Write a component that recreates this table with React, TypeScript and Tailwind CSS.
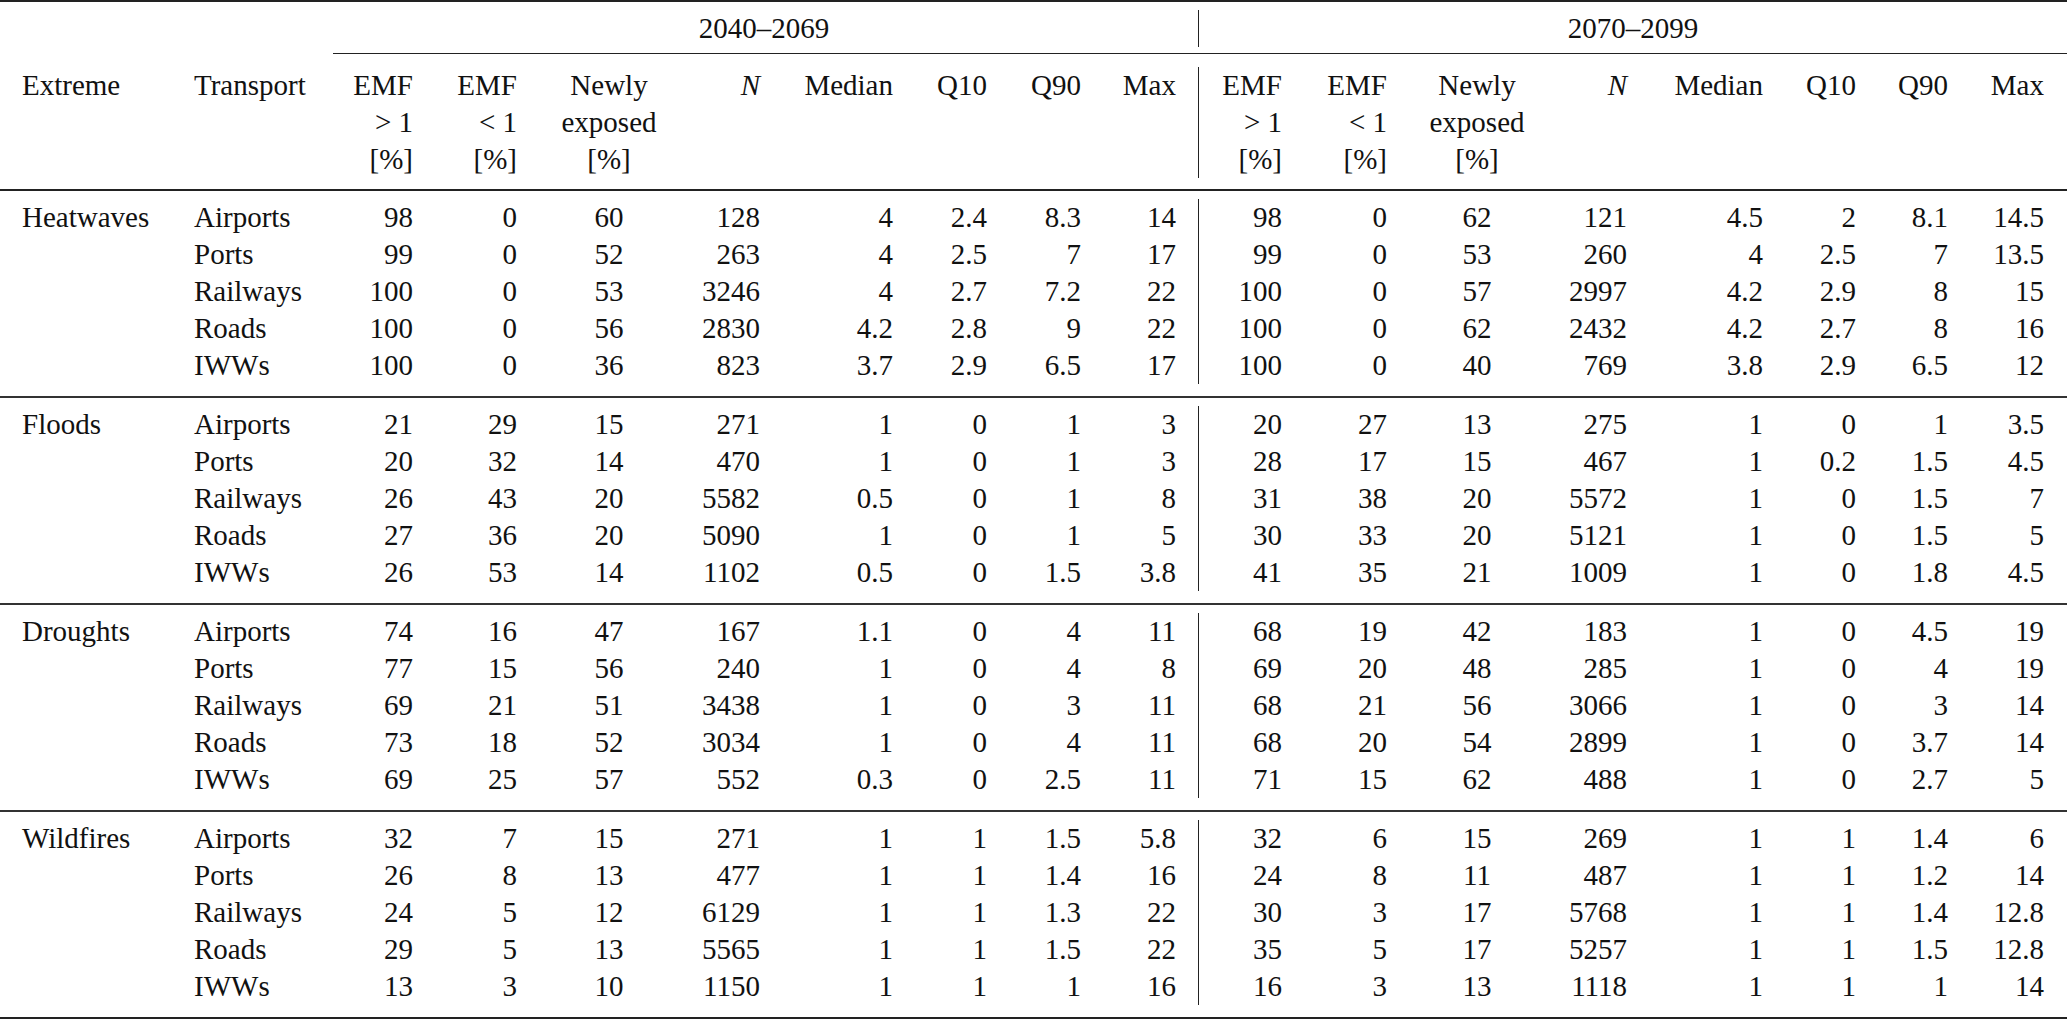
import React from "react";

type Row = { t: string; a: string[]; b: string[] };
type Group = { name: string; rows: Row[] };

const groups: Group[] = [
  {
    name: "Heatwaves",
    rows: [
      { t: "Airports", a: ["98", "0", "60", "128", "4", "2.4", "8.3", "14"], b: ["98", "0", "62", "121", "4.5", "2", "8.1", "14.5"] },
      { t: "Ports", a: ["99", "0", "52", "263", "4", "2.5", "7", "17"], b: ["99", "0", "53", "260", "4", "2.5", "7", "13.5"] },
      { t: "Railways", a: ["100", "0", "53", "3246", "4", "2.7", "7.2", "22"], b: ["100", "0", "57", "2997", "4.2", "2.9", "8", "15"] },
      { t: "Roads", a: ["100", "0", "56", "2830", "4.2", "2.8", "9", "22"], b: ["100", "0", "62", "2432", "4.2", "2.7", "8", "16"] },
      { t: "IWWs", a: ["100", "0", "36", "823", "3.7", "2.9", "6.5", "17"], b: ["100", "0", "40", "769", "3.8", "2.9", "6.5", "12"] },
    ],
  },
  {
    name: "Floods",
    rows: [
      { t: "Airports", a: ["21", "29", "15", "271", "1", "0", "1", "3"], b: ["20", "27", "13", "275", "1", "0", "1", "3.5"] },
      { t: "Ports", a: ["20", "32", "14", "470", "1", "0", "1", "3"], b: ["28", "17", "15", "467", "1", "0.2", "1.5", "4.5"] },
      { t: "Railways", a: ["26", "43", "20", "5582", "0.5", "0", "1", "8"], b: ["31", "38", "20", "5572", "1", "0", "1.5", "7"] },
      { t: "Roads", a: ["27", "36", "20", "5090", "1", "0", "1", "5"], b: ["30", "33", "20", "5121", "1", "0", "1.5", "5"] },
      { t: "IWWs", a: ["26", "53", "14", "1102", "0.5", "0", "1.5", "3.8"], b: ["41", "35", "21", "1009", "1", "0", "1.8", "4.5"] },
    ],
  },
  {
    name: "Droughts",
    rows: [
      { t: "Airports", a: ["74", "16", "47", "167", "1.1", "0", "4", "11"], b: ["68", "19", "42", "183", "1", "0", "4.5", "19"] },
      { t: "Ports", a: ["77", "15", "56", "240", "1", "0", "4", "8"], b: ["69", "20", "48", "285", "1", "0", "4", "19"] },
      { t: "Railways", a: ["69", "21", "51", "3438", "1", "0", "3", "11"], b: ["68", "21", "56", "3066", "1", "0", "3", "14"] },
      { t: "Roads", a: ["73", "18", "52", "3034", "1", "0", "4", "11"], b: ["68", "20", "54", "2899", "1", "0", "3.7", "14"] },
      { t: "IWWs", a: ["69", "25", "57", "552", "0.3", "0", "2.5", "11"], b: ["71", "15", "62", "488", "1", "0", "2.7", "5"] },
    ],
  },
  {
    name: "Wildfires",
    rows: [
      { t: "Airports", a: ["32", "7", "15", "271", "1", "1", "1.5", "5.8"], b: ["32", "6", "15", "269", "1", "1", "1.4", "6"] },
      { t: "Ports", a: ["26", "8", "13", "477", "1", "1", "1.4", "16"], b: ["24", "8", "11", "487", "1", "1", "1.2", "14"] },
      { t: "Railways", a: ["24", "5", "12", "6129", "1", "1", "1.3", "22"], b: ["30", "3", "17", "5768", "1", "1", "1.4", "12.8"] },
      { t: "Roads", a: ["29", "5", "13", "5565", "1", "1", "1.5", "22"], b: ["35", "5", "17", "5257", "1", "1", "1.5", "12.8"] },
      { t: "IWWs", a: ["13", "3", "10", "1150", "1", "1", "1", "16"], b: ["16", "3", "13", "1118", "1", "1", "1", "14"] },
    ],
  },
];

const GRID =
  "grid grid-cols-[194px_136px_83px_104px_184px_59px_133px_94px_94px_118px_83px_105px_180px_60px_136px_93px_92px_119px]";

function PeriodCells({ vals, first }: { vals: string[]; first: boolean }) {
  return (
    <>
      <div className="text-right">{vals[0]}</div>
      <div className="text-right">{vals[1]}</div>
      <div className="text-center">{vals[2]}</div>
      <div className="text-right">{vals[3]}</div>
      <div className="text-right">{vals[4]}</div>
      <div className="text-right">{vals[5]}</div>
      <div className="text-right">{vals[6]}</div>
      {first ? (
        <div className="text-right pr-[22px] border-r border-[#222]">{vals[7]}</div>
      ) : (
        <div className="text-right pr-[23px]">{vals[7]}</div>
      )}
    </>
  );
}

function HeaderCells({ first }: { first: boolean }) {
  const lastCls = first ? "text-right pr-[22px] border-r border-[#222]" : "text-right pr-[23px]";
  return (
    <>
      <div className="text-right flex flex-col">
        <span>EMF</span>
        <span>&gt; 1</span>
        <span>[%]</span>
      </div>
      <div className="text-right flex flex-col">
        <span>EMF</span>
        <span>&lt; 1</span>
        <span>[%]</span>
      </div>
      <div className="text-center flex flex-col">
        <span>Newly</span>
        <span>exposed</span>
        <span>[%]</span>
      </div>
      <div className="text-right italic">N</div>
      <div className="text-right">Median</div>
      <div className="text-right">Q10</div>
      <div className="text-right">Q90</div>
      <div className={lastCls}>Max</div>
    </>
  );
}

export default function App() {
  return (
    <div className="w-[2067px] h-[1021px] bg-white text-[#111] text-[29px] leading-[37px] font-['Liberation_Serif']">
      <div className="border-t-2 border-[#222]">
        {/* period row */}
        <div className={`${GRID} pt-[8px] pb-[6px]`}>
          <div />
          <div />
          <div className="col-span-8 text-center border-r border-[#222]">2040–2069</div>
          <div className="col-span-8 text-center">2070–2099</div>
        </div>
        {/* period rule */}
        <div className="flex">
          <div className="w-[333px]" />
          <div className="flex-1 border-t border-[#222]" />
        </div>
        {/* column header */}
        <div className={`${GRID} pt-[13px] pb-[11px] border-b-2 border-[#222]`}>
          <div className="pl-[22px]">Extreme</div>
          <div>Transport</div>
          <HeaderCells first />
          <HeaderCells first={false} />
        </div>
        {/* body */}
        {groups.map((g, gi) => (
          <div
            key={g.name}
            className={`${GRID} pt-[8px] pb-[12px] border-b-2 ${gi === groups.length - 1 ? "border-[#222]" : "border-[#333]"}`}
          >
            {g.rows.map((r, ri) => (
              <React.Fragment key={r.t}>
                <div className="pl-[22px]">{ri === 0 ? g.name : ""}</div>
                <div>{r.t}</div>
                <PeriodCells vals={r.a} first />
                <PeriodCells vals={r.b} first={false} />
              </React.Fragment>
            ))}
          </div>
        ))}
      </div>
    </div>
  );
}
